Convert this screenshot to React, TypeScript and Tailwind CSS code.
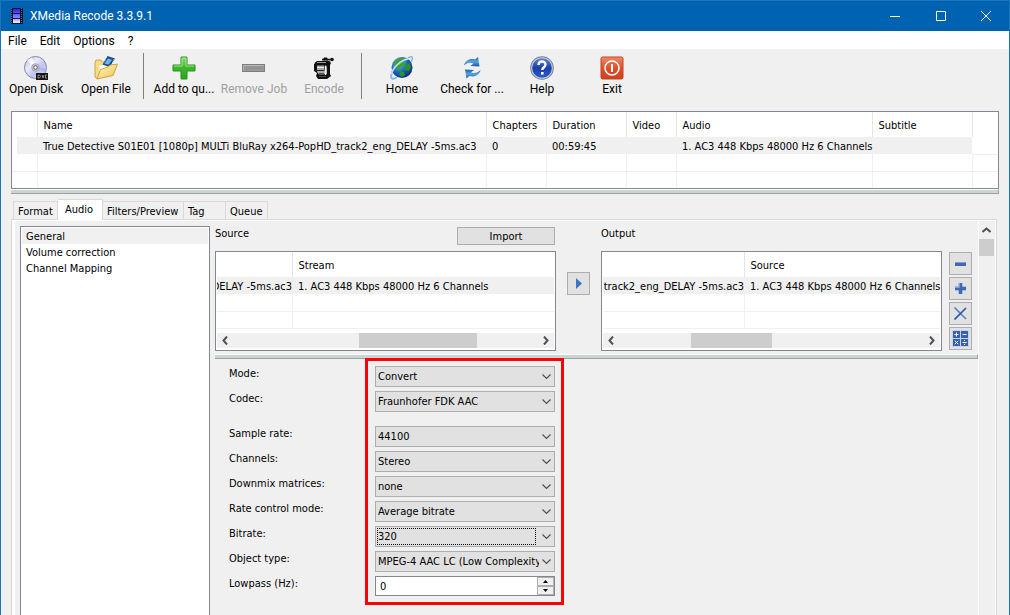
import { useState } from "react";
import type { ReactNode } from "react";

const STREAM = "1. AC3 448 Kbps 48000 Hz 6 Channels";

const MENU = ["File", "Edit", "Options", "?"];

const SIDE_ITEMS = ["General", "Volume correction", "Channel Mapping"];

const TABS = [
  { name: "Format", width: "w-[45px]" },
  { name: "Audio", width: "w-[45px]" },
  { name: "Filters/Preview", width: "w-[81px]" },
  { name: "Tag", width: "w-[42px]" },
  { name: "Queue", width: "w-[42px]" },
];

const FIELDS = [
  { id: "mode", label: "Mode:", value: "Convert" },
  { id: "codec", label: "Codec:", value: "Fraunhofer FDK AAC" },
  { id: "sampleRate", label: "Sample rate:", value: "44100" },
  { id: "channels", label: "Channels:", value: "Stereo" },
  { id: "downmix", label: "Downmix matrices:", value: "none" },
  { id: "rateControl", label: "Rate control mode:", value: "Average bitrate" },
  { id: "bitrate", label: "Bitrate:", value: "320" },
  { id: "objectType", label: "Object type:", value: "MPEG-4 AAC LC (Low Complexity" },
];

/* ---------- icons ---------- */

function FilmIcon() {
  return (
    <svg width="12" height="16" viewBox="0 0 12 16">
      <defs>
        <linearGradient id="film" x1="0" y1="0" x2="0" y2="1">
          <stop offset="0" stopColor="#2a22e8" />
          <stop offset="0.55" stopColor="#7d7af6" />
          <stop offset="1" stopColor="#f0f0ff" />
        </linearGradient>
      </defs>
      <rect width="12" height="16" fill="#151515" />
      <rect x="2" y="1" width="7" height="14" fill="url(#film)" />
      <path d="M2 5.500h7M2 10.500h7" stroke="#11116a" />
      <path d="M.5 0v16M10.500 0v16" stroke="#3f6f9f" strokeDasharray="1 1" />
    </svg>
  );
}

function DiskIcon() {
  return (
    <svg width="24" height="24" viewBox="0 0 24 24">
      <defs>
        <linearGradient id="disc" x1="0" y1="0" x2="1" y2="1">
          <stop offset="0" stopColor="#b4b6c8" />
          <stop offset="0.35" stopColor="#ececfa" />
          <stop offset="0.6" stopColor="#bfc3ee" />
          <stop offset="1" stopColor="#e4e4f8" />
        </linearGradient>
      </defs>
      <circle cx="11.500" cy="11.500" r="11" fill="url(#disc)" stroke="#85879b" />
      <path d="M11.500 11.500 3 4.500A11 11 0 0 1 8 1.500z" fill="#fff" opacity=".7" />
      <path d="M11.500 11.500 21 17a11 11 0 0 0 1.500-5z" fill="#a9aef0" opacity=".7" />
      <circle cx="11.500" cy="11.500" r="3.800" fill="#c9cadb" stroke="#9a9ba8" strokeWidth=".8" />
      <circle cx="11.500" cy="11.500" r="1.800" fill="#fff" stroke="#555" />
      <rect x="12" y="17" width="12" height="7" fill="#161616" />
      <path d="M14 19v3h1.500l1-1.500-1-1.500zM18 19l1 3 1-3M23 19h-1.500v3H23" fill="none" stroke="#bbb" strokeWidth=".7" />
    </svg>
  );
}

function FolderIcon() {
  return (
    <svg width="24" height="24" viewBox="0 0 24 24">
      <defs>
        <linearGradient id="folder" x1="0" y1="0" x2="1" y2="1">
          <stop offset="0" stopColor="#fff6c4" />
          <stop offset="1" stopColor="#f1c34c" />
        </linearGradient>
      </defs>
      <path d="M1 6.500 2 4h5l1.500 2H17v6L3 22.500 1 21z" fill="#f7dc84" stroke="#c0922c" strokeWidth=".8" />
      <path d="M5 9.500h10L17 15 6 18z" fill="#fff" />
      <path d="M13.500 0 21 2.500 15.500 11 8.500 8.500z" fill="#1c4f86" />
      <path d="m14 2.500 4 1.300-3.500 5-4-1.300z" fill="#67b5ee" />
      <path d="m12.500 1.500 .6.200M11 4l.6.200M9.700 6.200l.6.200M19.500 3.500l.6.200M18 6l.6.200" stroke="#d5e4f2" />
      <path d="M6.500 13.500 14 11l2-2 7.500-.8L19 19.500 3 23z" fill="url(#folder)" stroke="#c0922c" strokeWidth=".8" />
    </svg>
  );
}

function PlusIcon() {
  return (
    <svg width="24" height="24" viewBox="0 0 24 24">
      <defs>
        <linearGradient id="plus" x1="0" y1="0" x2="0" y2="1">
          <stop offset="0" stopColor="#8be06f" />
          <stop offset="0.5" stopColor="#3eb52c" />
          <stop offset="1" stopColor="#2fa31f" />
        </linearGradient>
      </defs>
      <path d="M9 1h6v8h8v6h-8v8H9v-8H1V9h8z" fill="url(#plus)" stroke="#2c9322" />
      <path d="M2 10h8V2h4v8h8" fill="none" stroke="#a6e894" opacity=".8" />
    </svg>
  );
}

function MinusIcon() {
  return (
    <svg width="24" height="24" viewBox="0 0 24 24">
      <rect x=".5" y="8.500" width="22" height="7" fill="#999" stroke="#7e7e7e" />
      <path d="M1.500 14.500v-5h20" fill="none" stroke="#b5b5b5" />
      <path d="M3 12h18" stroke="#8a8a8a" />
    </svg>
  );
}

function EncodeIcon() {
  return (
    <svg width="24" height="24" viewBox="0 0 24 24">
      <path d="M10 3.500h9" stroke="#111" strokeWidth="1.500" />
      <path d="M12 1.500h3l1.500 3h-6z" fill="#111" />
      <circle cx="20" cy="3.500" r="1.800" fill="#111" />
      <path d="M18 3.500v3" stroke="#777" />
      <path d="M5 5h12l2 2-1 2H3l-.5-2z" fill="#111" />
      <path d="M5 6.500h9" stroke="#999" />
      <path d="M2 8h16v10l1 2-4 3H6l-2-3 1-3-3-2z" fill="#111" />
      <path d="M5 9.500h9l1 1.500v7H6.500L5 16z" fill="#a8a8a8" />
      <path d="M5 11.500h9" stroke="#eee" />
      <path d="M4 14.500h8.500V9" fill="none" stroke="#222" />
      <path d="M13.500 10v9" stroke="#f4f4f4" strokeWidth="1.500" />
      <path d="M7 17h5v2H7z" fill="#555" />
      <path d="M7 20.500h7" stroke="#444" />
    </svg>
  );
}

function GlobeIcon() {
  return (
    <svg width="24" height="24" viewBox="0 0 24 24">
      <defs>
        <radialGradient id="globe" cx=".35" cy=".3" r=".8">
          <stop offset="0" stopColor="#66c3f5" />
          <stop offset="0.5" stopColor="#1a68c4" />
          <stop offset="1" stopColor="#07246e" />
        </radialGradient>
      </defs>
      <circle cx="12" cy="11.500" r="10.500" fill="url(#globe)" />
      <path d="M5 5c3-3 7-4 10-3l-2 3 3 2-3 3-3 1 1 4-3-1-2-4-3-1z" fill="#3da32c" />
      <path d="M15 9l4-2 2 4-2 4-4-1-1-3zM10 15l4 1 1 3-3 2-3-2z" fill="#2f8f2a" />
      <path d="M19 2.500C11 4 3 11 1.500 18 0 23 3 24 7 21" fill="none" stroke="#86b9dd" strokeWidth="2" />
      <path d="M18 2c4-2.500 6-1 3 4" fill="none" stroke="#86b9dd" strokeWidth="1.600" />
      <path d="M19 2.500C11 4 3 11 1.500 18" fill="none" stroke="#e6f5ff" strokeWidth=".9" />
    </svg>
  );
}

function RefreshIcon() {
  return (
    <svg width="24" height="24" viewBox="0 0 24 24">
      <defs>
        <linearGradient id="refresh" x1="0" y1="0" x2="0" y2="1">
          <stop offset="0" stopColor="#2160a8" />
          <stop offset="0.5" stopColor="#55a5e2" />
          <stop offset="1" stopColor="#1c579d" />
        </linearGradient>
      </defs>
      <path d="M4 9.500C5 4.500 10 2 15 3.500l3-2.500 1.500 9.500-9-.5 3-2.500c-4-1.500-7-.5-9.500 2z" fill="url(#refresh)" />
      <path d="M20.500 14c-1 5-6 7.500-11 6l-3 2.500L5 13.500l9 .5-3 2.500c4 1.500 7 0 9.500-2.500z" fill="url(#refresh)" />
    </svg>
  );
}

function HelpIcon() {
  return (
    <svg width="24" height="24" viewBox="0 0 24 24">
      <defs>
        <linearGradient id="help" x1="0" y1="0" x2="0" y2="1">
          <stop offset="0" stopColor="#5b84d8" />
          <stop offset="0.5" stopColor="#1b3fa8" />
          <stop offset="1" stopColor="#2c5cc8" />
        </linearGradient>
      </defs>
      <circle cx="12" cy="12" r="11.800" fill="#737f95" />
      <circle cx="12" cy="12" r="10.800" fill="#c3cddd" />
      <circle cx="12" cy="12" r="9.800" fill="url(#help)" />
      <path d="M8.500 9c0-4.500 7-4.500 7-.5 0 2.800-3.200 2.700-3.200 5.500" fill="none" stroke="#fff" strokeWidth="2.400" />
      <rect x="11" y="16" width="2.600" height="2.600" fill="#fff" />
    </svg>
  );
}

function ExitIcon() {
  return (
    <svg width="24" height="24" viewBox="0 0 24 24">
      <defs>
        <linearGradient id="exit" x1="0" y1="0" x2="0" y2="1">
          <stop offset="0" stopColor="#f08a66" />
          <stop offset="0.5" stopColor="#e04e28" />
          <stop offset="1" stopColor="#d2401c" />
        </linearGradient>
      </defs>
      <rect x="1" y="1" width="22" height="22" rx="1.500" fill="url(#exit)" stroke="#b9482a" />
      <circle cx="12" cy="12" r="7" fill="none" stroke="#fff" strokeWidth="1.600" />
      <path d="M12 8v8" stroke="#fff" strokeWidth="2" />
    </svg>
  );
}

function Chevron({ d, size = 9 }: { d: string; size?: number }) {
  return (
    <svg width={size} height={size} viewBox="0 0 9 9" fill="none" stroke="#505050" strokeWidth="2">
      <path d={d} />
    </svg>
  );
}

/* ---------- pieces ---------- */

function ToolButton({ label, icon, disabled }: { label: string; icon: ReactNode; disabled?: boolean }) {
  return (
    <button
      disabled={disabled}
      className="flex w-[70px] shrink-0 flex-col items-center whitespace-nowrap pt-[7px] font-[Roboto,sans-serif] text-xs leading-[18px] disabled:text-[#a0a0a0]"
    >
      {icon}
      {label}
    </button>
  );
}

function Splitter() {
  return (
    <div className="h-[5px] border-r border-b border-t border-t-white border-r-[#a0a0a0] border-b-[#a0a0a0] bg-[#c8d6d4]" />
  );
}

function FileTable() {
  return (
    <div className="border border-[#828790] bg-white">
      <table className="w-full table-fixed border-collapse text-left">
        <colgroup>
          <col className="w-[25px]" />
          <col className="w-[449px]" />
          <col className="w-[60px]" />
          <col className="w-[80px]" />
          <col className="w-[50px]" />
          <col className="w-[196px]" />
          <col className="w-[100px]" />
          <col />
        </colgroup>
        <thead>
          <tr className="h-[25px]">
            {["", "Name", "Chapters", "Duration", "Video", "Audio", "Subtitle"].map((h) => (
              <th key={h} className="border-r border-[#e5e5e5] pt-[2px] pl-[6px] font-normal">
                {h}
              </th>
            ))}
            <th />
          </tr>
        </thead>
        <tbody>
          <tr className="h-[17px] whitespace-nowrap">
            <td className="pl-[5px]">
              <div className="h-[17px] bg-[#f0f0f0]" />
            </td>
            {[
              "True Detective S01E01 [1080p] MULTi BluRay x264-PopHD_track2_eng_DELAY -5ms.ac3",
              "0",
              "00:59:45",
              "",
              STREAM,
              "",
            ].map((c, i) => (
              <td key={i} className="bg-[#f0f0f0] pt-[2px] pl-[6px]">
                {c}
              </td>
            ))}
            <td className="border-b border-[#f0f0f0]" />
          </tr>
          {[0, 1].map((r) => (
            <tr key={r} className="h-[17px]">
              {[0, 1, 2, 3, 4, 5, 6].map((c) => (
                <td key={c} className={r === 0 ? "border-r border-b border-[#f0f0f0]" : "border-r border-[#f0f0f0]"} />
              ))}
              <td className={r === 0 ? "border-b border-[#f0f0f0]" : ""} />
            </tr>
          ))}
        </tbody>
      </table>
    </div>
  );
}

function StreamTable({
  header,
  file,
  firstCol,
  thumb,
}: {
  header: string;
  file: string;
  firstCol: string;
  thumb: string;
}) {
  return (
    <div className="w-[341px] shrink-0 border border-[#828790] bg-white px-px pb-[2px]">
      <table className="w-full table-fixed border-collapse text-left">
        <colgroup>
          <col className={firstCol} />
          <col />
        </colgroup>
        <thead>
          <tr className="h-[25px]">
            <th className="border-r border-[#e5e5e5]" />
            <th className="pt-[2px] pl-[6px] font-normal">{header}</th>
          </tr>
        </thead>
        <tbody>
          <tr className="h-[17px] whitespace-nowrap bg-[#f0f0f0]">
            <td className="pt-[2px]">
              <div className="flex justify-end overflow-hidden">{file}</div>
            </td>
            <td className="pt-[2px] pl-[6px]">{STREAM}</td>
          </tr>
          {[0, 1].map((r) => (
            <tr key={r} className="h-[17px]">
              <td className="border-r border-b border-[#f0f0f0]" />
              <td className="border-b border-[#f0f0f0]" />
            </tr>
          ))}
        </tbody>
      </table>
      <div className="mt-1 flex h-[15px] items-center bg-[#f0f0f0] px-1">
        <button aria-label="Scroll left">
          <Chevron d="M6 0.500 2.500 4.500 6 8.500" />
        </button>
        <div className="flex h-full flex-1">
          <div className={thumb} />
        </div>
        <button aria-label="Scroll right">
          <Chevron d="M3 0.500 6.500 4.500 3 8.500" />
        </button>
      </div>
    </div>
  );
}

function SquareButton({ label, children }: { label: string; children: ReactNode }) {
  return (
    <button
      aria-label={label}
      className="flex size-[23px] items-center justify-center border border-[#adadad] bg-[#e1e1e1]"
    >
      {children}
    </button>
  );
}

function StreamButtons() {
  return (
    <div className="flex flex-col gap-[2px] pt-px">
      <SquareButton label="Remove stream">
        <svg width="11" height="11" viewBox="0 0 11 11">
          <path d="M0 4h11v4H0z" fill="#3f68b5" />
          <path d="M0 4.500h11" stroke="#7f9fd6" />
        </svg>
      </SquareButton>
      <SquareButton label="Add stream">
        <svg width="11" height="11" viewBox="0 0 11 11">
          <path d="M4 0h3v4h4v3H7v4H4V7H0V4h4z" fill="#3f68b5" stroke="#3f68b5" strokeWidth=".6" />
          <path d="M4.500 0v4.500H0" fill="none" stroke="#7f9fd6" />
        </svg>
      </SquareButton>
      <SquareButton label="Delete stream">
        <svg width="13" height="13" viewBox="0 0 13 13" fill="none" strokeWidth="1.700">
          <path d="M.5 .5 12 12" stroke="#5b86cc" />
          <path d="M12 1 .5 12.500" stroke="#2f57a6" />
        </svg>
      </SquareButton>
      <SquareButton label="Calculator">
        <svg width="17" height="17" viewBox="0 0 17 17">
          <path d="M0 0h17v17H0z" fill="#c5d3ec" />
          <path d="M1 1h7v7H1zM9 1h7v7H9zM1 9h7v7H1zM9 9h7v7H9z" fill="#3761b0" />
          <path
            d="M4.500 2.500v4M2.500 4.500h4M10.500 4.500h4M2.800 10.800l3.400 3.400M6.200 10.800l-3.400 3.400M10.500 12.500h4M12.500 10v1M12.500 14v1"
            stroke="#fff"
          />
        </svg>
      </SquareButton>
    </div>
  );
}

function SettingsForm() {
  return (
    <div className="flex pl-[14px]">
      <div className="flex w-[136px] flex-col pt-2">
        {FIELDS.map((f) => (
          <label key={f.id} htmlFor={f.id} className={f.id === "sampleRate" ? "mt-[10px] h-[25px]" : "h-[25px]"}>
            {f.label}
          </label>
        ))}
        <label htmlFor="lowpass">Lowpass (Hz):</label>
      </div>

      <div className="-mt-px flex w-[199px] flex-col gap-1 border-3 border-[#ff0000] pt-[5px] pr-[6px] pb-[6px] pl-[7px]">
        {FIELDS.map((f) => (
          <div key={f.id} className={f.id === "sampleRate" ? "relative mt-[10px]" : "relative"}>
            <select
              id={f.id}
              className="block h-[21px] w-full appearance-none border border-[#adadad] bg-[#e1e1e1] pt-[2px] pr-[15px] pl-[2px] outline-none"
            >
              <option>{f.value}</option>
            </select>
            {f.id === "bitrate" && (
              <div className="pointer-events-none absolute inset-y-[2px] right-[19px] left-[2px] border border-dotted border-black" />
            )}
            <svg
              className="pointer-events-none absolute top-[8px] right-[4px]"
              width="9"
              height="6"
              viewBox="0 0 9 6"
              fill="none"
              stroke="#505050"
              strokeWidth="1.200"
            >
              <path d="M.5 .5l4 4 4-4" />
            </svg>
          </div>
        ))}
        <div className="flex h-[20px] border border-[#828790] bg-white">
          <input id="lowpass" defaultValue="0" className="w-0 flex-1 pt-[2px] pl-1 outline-none" />
          <div className="flex w-[17px] flex-col bg-[#f0f0f0]">
            <button aria-label="Increase" className="flex h-[9px] items-center justify-center border border-[#b0b0b0] bg-[#f0f0f0]">
              <svg width="5" height="3" viewBox="0 0 5 3">
                <path d="M2.500 0 5 3H0z" />
              </svg>
            </button>
            <button aria-label="Decrease" className="flex h-[9px] items-center justify-center border border-[#b0b0b0] bg-[#f0f0f0]">
              <svg width="5" height="3" viewBox="0 0 5 3">
                <path d="M2.500 3 5 0H0z" />
              </svg>
            </button>
          </div>
        </div>
      </div>
    </div>
  );
}

export default function App() {
  const [tab, setTab] = useState("Audio");
  const [side, setSide] = useState("General");

  return (
    <div className="flex min-h-screen flex-col border-x border-[#1a75bb] bg-[#f0f0f0] font-['DejaVu_Sans_Condensed','DejaVu_Sans',sans-serif] text-[11px] leading-[14px] text-black">
      {/* Title bar */}
      <header className="flex h-[31px] items-center border-t border-[#1a75bb] bg-[#0063b1] pl-[10px] font-[Roboto,sans-serif] text-xs text-white">
        <FilmIcon />
        <h1 className="ml-[7px] flex-1">XMedia Recode 3.3.9.1</h1>
        <button aria-label="Minimize" className="flex w-[46px] justify-center">
          <svg width="10" height="10" viewBox="0 0 10 10" stroke="#fff">
            <path d="M0 5.500h10" />
          </svg>
        </button>
        <button aria-label="Maximize" className="flex w-[45px] justify-center">
          <svg width="10" height="10" viewBox="0 0 10 10" stroke="#fff" fill="none">
            <path d="M.5 .5h9v9h-9z" />
          </svg>
        </button>
        <button aria-label="Close" className="flex w-[46px] justify-center">
          <svg width="10" height="10" viewBox="0 0 10 10" stroke="#fff">
            <path d="M0 0l10 10M10 0 0 10" />
          </svg>
        </button>
      </header>

      {/* Menu */}
      <nav className="flex h-[18px] items-center gap-[13px] bg-white pt-[2px] pl-[7px] font-[Roboto,sans-serif] text-xs">
        {MENU.map((m) => (
          <button key={m}>{m}</button>
        ))}
      </nav>

      {/* Toolbar */}
      <div className="flex h-[62px]">
        <ToolButton label="Open Disk" icon={<DiskIcon />} />
        <ToolButton label="Open File" icon={<FolderIcon />} />
        <div className="mx-[2px] mt-1 h-[46px] w-px bg-[#808080]" />
        <div className="ml-[3px] flex">
          <ToolButton label="Add to qu..." icon={<PlusIcon />} />
          <ToolButton label="Remove Job" icon={<MinusIcon />} disabled />
          <ToolButton label="Encode" icon={<EncodeIcon />} disabled />
        </div>
        <div className="mx-[2px] mt-1 h-[46px] w-px bg-[#808080]" />
        <div className="ml-[3px] flex">
          <ToolButton label="Home" icon={<GlobeIcon />} />
          <ToolButton label="Check for ..." icon={<RefreshIcon />} />
          <ToolButton label="Help" icon={<HelpIcon />} />
          <ToolButton label="Exit" icon={<ExitIcon />} />
        </div>
      </div>

      <main className="flex flex-1 flex-col pr-[10px] pl-[10px]">
        <FileTable />
        <Splitter />

        {/* Tabs */}
        <div className="ml-[2px] mt-[5px] flex items-end">
          {TABS.map((t) => (
            <button
              key={t.name}
              onClick={() => setTab(t.name)}
              className={`${t.width} relative shrink-0 border-t border-r border-[#d9d9d9] text-left whitespace-nowrap first:border-l ${
                tab === t.name ? "-mb-px h-[21px] bg-white pl-[7px]" : "h-[18px] pt-[2px] pl-1"
              }`}
            >
              {t.name}
            </button>
          ))}
        </div>

        <div className="mr-[2px] flex flex-1 border-t border-r border-l border-[#d9d9d9]">
          <div className="flex flex-1 border-t border-l-3 border-white pt-[5px] pl-[5px]">
            <ul className="w-[190px] shrink-0 border border-b-0 border-[#828790] bg-white px-px pt-[1px]">
              {SIDE_ITEMS.map((s) => (
                <li key={s}>
                  <button
                    onClick={() => setSide(s)}
                    className={`block h-[16px] w-full pt-[2px] pl-1 text-left ${side === s ? "bg-[#f0f0f0]" : ""}`}
                  >
                    {s}
                  </button>
                </li>
              ))}
            </ul>

            <section className="min-w-0 flex-1 pl-[5px]">
              <div className="flex">
                <div className="w-[341px]">
                  <div className="flex h-[25px] items-start justify-between pt-px pr-px">
                    <span>Source</span>
                    <button className="h-[18px] w-[98px] border border-[#adadad] bg-[#e1e1e1] pt-px">Import</button>
                  </div>
                  <StreamTable
                    header="Stream"
                    file="DELAY -5ms.ac3"
                    firstCol="w-[75px]"
                    thumb="ml-[129px] w-[118px] bg-[#cdcdcd]"
                  />
                </div>
                <div className="px-[11px] pt-[46px]">
                  <SquareButton label="Add to output">
                    <svg width="6" height="11" viewBox="0 0 6 11">
                      <path d="M0 0l6 5.500L0 11z" fill="#3f74c4" />
                    </svg>
                  </SquareButton>
                </div>
                <div className="w-[341px]">
                  <div className="h-[25px] pt-px">Output</div>
                  <StreamTable
                    header="Source"
                    file="track2_eng_DELAY -5ms.ac3"
                    firstCol="w-[141px]"
                    thumb="ml-[75px] w-[81px] bg-[#cdcdcd]"
                  />
                </div>
                <div className="pt-[25px] pl-[7px]">
                  <StreamButtons />
                </div>
              </div>

              <div className="mt-[3px]">
                <Splitter />
              </div>

              <SettingsForm />
            </section>

            <div className="-mt-[5px] flex w-[18px] flex-col items-start border-x border-white pt-[5px]">
              <button aria-label="Scroll up" className="flex h-[13px] w-[15px] items-start justify-center">
                <Chevron d="M0.500 6 4.500 2.500 8.500 6" />
              </button>
              <div className="h-[17px] w-[15px] bg-[#cdcdcd]" />
            </div>
          </div>
        </div>
      </main>
    </div>
  );
}
